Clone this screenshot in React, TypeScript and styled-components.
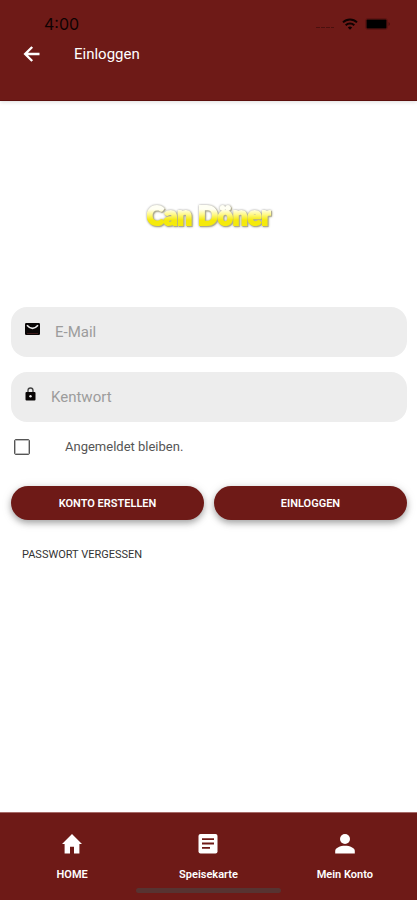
import React from "react";
import styled, { createGlobalStyle } from "styled-components";

const maroon = "#6e1a17";

const GlobalStyle = createGlobalStyle`
  *, *::before, *::after { box-sizing: border-box; }
  body { margin: 0; background: #fff; font-family: Roboto, "Liberation Sans", sans-serif; }
  button, input { font: inherit; }
`;

const Screen = styled.div`
  min-height: 100vh;
  display: flex;
  flex-direction: column;
  background: #fff;
`;

const Header = styled.header`
  height: 101px;
  padding-top: 14px;
  background: ${maroon};
  border-bottom: 1px solid #5c0f0d;
  box-shadow: 0 1px 4px rgba(0, 0, 0, 0.14);
`;

const StatusBar = styled.div`
  height: 20px;
  padding: 0 27px 0 44px;
  display: flex;
  align-items: center;
  justify-content: space-between;
  color: #0f0202;
`;

const Clock = styled.time`
  font: 400 16px/20px Inter, sans-serif;
`;

const StatusIcons = styled.div`
  display: flex;
  align-items: center;
  gap: 7px;
`;

const TitleBar = styled.div`
  height: 40px;
  padding-left: 20px;
  display: flex;
  align-items: center;
  gap: 30px;
  color: #fff;
`;

const BackButton = styled.button`
  width: 24px;
  height: 24px;
  padding: 0;
  border: 0;
  background: none;
  color: inherit;
  display: grid;
  place-items: center;
`;

const Title = styled.h1`
  margin: 0;
  font-size: 15px;
  line-height: 20px;
  font-weight: 400;
`;

const Main = styled.main`
  flex: 1;
  padding: 0 10px 0 11px;
  display: flex;
  flex-direction: column;
`;

const LogoArea = styled.div`
  height: 206px;
  padding-top: 98px;
  display: flex;
  justify-content: center;
`;

const Logo = styled.div`
  height: 32px;
  font: 900 26px/32px Lato, "Open Sans", sans-serif;
  color: transparent;
  -webkit-text-stroke: 2px transparent;
  background: linear-gradient(#fffff4 32%, #fff98c 48%, #f5ea0a 66%);
  background-clip: text;
  -webkit-background-clip: text;
  filter: drop-shadow(0 0 1px #a3a3a3) drop-shadow(1px 1px 0 #b4b08c);
`;

const Form = styled.form`
  display: flex;
  flex-direction: column;
`;

const Field = styled.label<{ $gap: number }>`
  height: 50px;
  margin-bottom: 15px;
  padding: 0 14px;
  display: flex;
  align-items: center;
  gap: ${(p) => p.$gap}px;
  border-radius: 16px;
  background: #ededed;
  color: #090606;

  svg { flex: none; margin-bottom: 6px; }
`;

const TextInput = styled.input`
  flex: 1;
  min-width: 0;
  height: 48px;
  padding: 0;
  border: 0;
  outline: 0;
  background: transparent;
  color: #222;
  font-size: 15px;

  &::placeholder { color: #9c9c9c; opacity: 1; }
`;

const Remember = styled.label`
  height: 20px;
  padding-left: 3px;
  display: flex;
  align-items: center;
  gap: 35px;
  color: #555;
  font-size: 13px;
  line-height: 20px;
`;

const Checkbox = styled.input`
  appearance: none;
  width: 16px;
  height: 16px;
  margin: 0;
  border: 1px solid #555;
  border-radius: 2px;
  background: #fff;
  box-shadow: inset 0 0 0 1px #bbb;

  &:checked { background: ${maroon}; }
`;

const Actions = styled.div`
  margin-top: 29px;
  display: grid;
  grid-template-columns: 1fr 1fr;
  gap: 10px;
`;

const ActionButton = styled.button`
  height: 34px;
  padding: 0;
  border: 0;
  border-radius: 17px;
  background: ${maroon};
  box-shadow: 0 3px 6px rgba(0, 0, 0, 0.3), 0 2px 12px rgba(0, 0, 0, 0.1);
  color: #fff;
  font-size: 11px;
  font-weight: 600;
`;

const ForgotLink = styled.a`
  align-self: flex-start;
  margin: 27px 0 0 11px;
  color: #333;
  font-size: 11px;
  line-height: 16px;
  text-decoration: none;
`;

const TabBar = styled.nav`
  height: 88px;
  border-top: 1px solid #a66a68;
  background: ${maroon};
  display: flex;
  flex-direction: column;
  justify-content: space-between;
  align-items: center;
`;

const Tabs = styled.div`
  width: 100%;
  padding: 20px 4px 0;
  display: grid;
  grid-template-columns: repeat(3, 1fr);
`;

const Tab = styled.a`
  display: flex;
  flex-direction: column;
  align-items: center;
  gap: 12px;
  color: #fff;
  font-size: 11px;
  line-height: 16px;
  font-weight: 600;
  text-decoration: none;
`;

const HomeIndicator = styled.div`
  width: 35%;
  height: 5px;
  margin-bottom: 7px;
  border-radius: 3px;
  background: #573331;
`;

const SignalIcon = () => (
  <svg width="20" height="12" viewBox="0 0 20 12" fill="#4b100e" aria-hidden="true">
    <path d="M1 9h4v1H1zM6 9h4v1H6zM11 9h4v1h-4zM16 9h3v1h-3z" />
  </svg>
);

const WifiIcon = () => (
  <svg width="16" height="12" viewBox="0 0 16 12" fill="none" stroke="currentColor" strokeWidth="2" aria-hidden="true">
    <path d="M1 4.4a10 10 0 0 1 14 0M3.7 7.2a6.1 6.1 0 0 1 8.6 0" />
    <path d="M8 11.7 5.8 9.5a3.2 3.2 0 0 1 4.4 0z" fill="currentColor" stroke="none" />
  </svg>
);

const BatteryIcon = () => (
  <svg width="25" height="12" viewBox="0 0 25 12" aria-hidden="true">
    <rect x="0.5" y="0.5" width="22" height="11" rx="2.5" fill="none" stroke="#5d1412" />
    <rect x="1.5" y="1.5" width="20" height="9" rx="1" fill="#000" />
    <path d="M23.5 4v4q1.5-.8 1.5-2t-1.5-2" fill="#4b100e" />
  </svg>
);

const BackIcon = () => (
  <svg width="18" height="18" viewBox="0 0 18 18" fill="none" stroke="currentColor" strokeWidth="2.4" aria-hidden="true">
    <path d="M16.5 9H2.5M9.2 2 2.2 9l7 7" />
  </svg>
);

const MailIcon = () => (
  <svg width="15" height="12" viewBox="0 0 15 12" aria-hidden="true">
    <rect width="15" height="12" rx="1.2" fill="currentColor" />
    <path d="M2 2.2Q7.5 8.6 13 2.2" fill="none" stroke="#ededed" strokeWidth="1.6" />
    <path d="M2 10.5h11" stroke="#4d1f1f" strokeWidth="0.8" />
  </svg>
);

const LockIcon = () => (
  <svg width="11" height="14" viewBox="0 0 11 14" aria-hidden="true">
    <path d="M3 6V3.5a2.5 2.5 0 0 1 5 0V6" fill="none" stroke="#444" strokeWidth="1.3" />
    <rect x="0.5" y="5" width="10" height="8.5" rx="1" fill="currentColor" />
    <circle cx="5.5" cy="9.2" r="1.2" fill="#ededed" />
  </svg>
);

const HomeIcon = () => (
  <svg width="22" height="22" viewBox="0 0 22 22" fill="currentColor" aria-hidden="true">
    <path d="M11 1 1 11h2.6v9.4H9v-6.6h4v6.6h5.4V11H21z" />
  </svg>
);

const MenuIcon = () => (
  <svg width="22" height="22" viewBox="0 0 22 22" aria-hidden="true">
    <rect x="1.5" y="1" width="19" height="19.5" rx="2" fill="currentColor" />
    <path d="M5 6.2h12M5 10.5h12M5 14.8h8" stroke={maroon} strokeWidth="1.8" />
  </svg>
);

const PersonIcon = () => (
  <svg width="22" height="22" viewBox="0 0 22 22" fill="currentColor" aria-hidden="true">
    <circle cx="11" cy="6" r="5" />
    <path d="M1.2 20.4V18c0-3.2 5-5.2 9.8-5.2s9.8 2 9.8 5.2v2.4z" />
  </svg>
);

const tabs = [
  { label: "HOME", Icon: HomeIcon },
  { label: "Speisekarte", Icon: MenuIcon },
  { label: "Mein Konto", Icon: PersonIcon },
];

export default function App() {
  return (
    <Screen>
      <GlobalStyle />
      <Header>
        <StatusBar>
          <Clock>4:00</Clock>
          <StatusIcons>
            <SignalIcon />
            <WifiIcon />
            <BatteryIcon />
          </StatusIcons>
        </StatusBar>
        <TitleBar>
          <BackButton type="button" aria-label="Zurück">
            <BackIcon />
          </BackButton>
          <Title>Einloggen</Title>
        </TitleBar>
      </Header>
      <Main>
        <LogoArea>
          <Logo>Can Döner</Logo>
        </LogoArea>
        <Form onSubmit={(e) => e.preventDefault()}>
          <Field $gap={15}>
            <MailIcon />
            <TextInput type="email" placeholder="E-Mail" aria-label="E-Mail" />
          </Field>
          <Field $gap={15}>
            <LockIcon />
            <TextInput type="password" placeholder="Kentwort" aria-label="Kentwort" />
          </Field>
          <Remember>
            <Checkbox type="checkbox" />
            Angemeldet bleiben.
          </Remember>
          <Actions>
            <ActionButton type="button">KONTO ERSTELLEN</ActionButton>
            <ActionButton type="submit">EINLOGGEN</ActionButton>
          </Actions>
          <ForgotLink href="#passwort">PASSWORT VERGESSEN</ForgotLink>
        </Form>
      </Main>
      <TabBar>
        <Tabs>
          {tabs.map(({ label, Icon }) => (
            <Tab key={label} href={"#" + label}>
              <Icon />
              {label}
            </Tab>
          ))}
        </Tabs>
        <HomeIndicator />
      </TabBar>
    </Screen>
  );
}
